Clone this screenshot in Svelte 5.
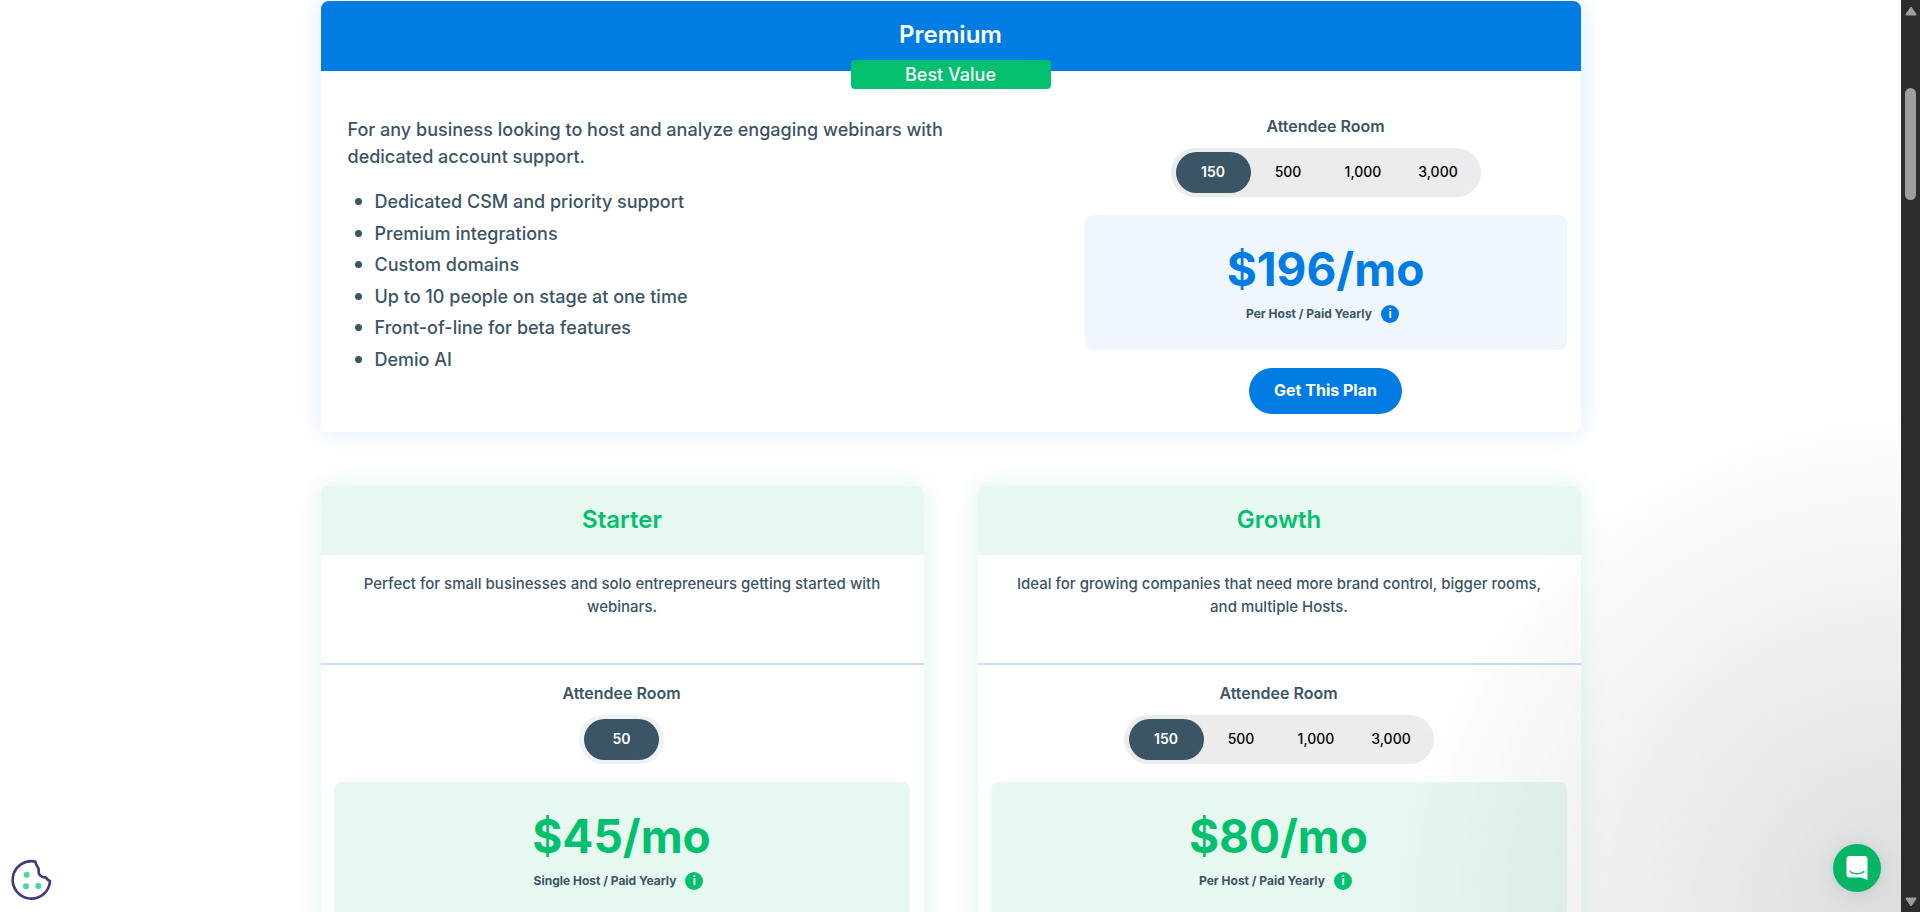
<script lang="ts">
  type Plan = {
    name: string;
    blurb: string;
    rooms: string[];
    prices: string[];
    host: string;
  };

  const features = [
    'Dedicated CSM and priority support',
    'Premium integrations',
    'Custom domains',
    'Up to 10 people on stage at one time',
    'Front-of-line for beta features',
    'Demio AI',
  ];

  const premium: Plan = {
    name: 'Premium',
    blurb: 'For any business looking to host and analyze engaging webinars with dedicated account support.',
    rooms: ['150', '500', '1,000', '3,000'],
    prices: ['$196', '$196', '$196', '$196'],
    host: 'Per Host / Paid Yearly',
  };

  const plans: Plan[] = [
    {
      name: 'Starter',
      blurb: 'Perfect for small businesses and solo entrepreneurs getting started with webinars.',
      rooms: ['50'],
      prices: ['$45'],
      host: 'Single Host / Paid Yearly',
    },
    {
      name: 'Growth',
      blurb: 'Ideal for growing companies that need more brand control, bigger rooms, and multiple Hosts.',
      rooms: ['150', '500', '1,000', '3,000'],
      prices: ['$80', '$80', '$80', '$80'],
      host: 'Per Host / Paid Yearly',
    },
  ];

  let selected: Record<string, number> = $state({ Premium: 0, Starter: 0, Growth: 0 });
</script>

{#snippet picker(plan: Plan)}
  <h3 class="label" id="room-{plan.name}">Attendee Room</h3>
  <div class="switch" class:single={plan.rooms.length === 1} role="group" aria-labelledby="room-{plan.name}">
    {#each plan.rooms as room, i}
      <button
        type="button"
        class="option"
        class:active={selected[plan.name] === i}
        aria-pressed={selected[plan.name] === i}
        onclick={() => (selected[plan.name] = i)}>{room}</button>
    {/each}
  </div>
  <div class="price-box">
    <p class="price">{plan.prices[selected[plan.name]]}/mo</p>
    <p class="terms">
      <span>{plan.host}</span>
      <button type="button" class="info">i</button>
    </p>
  </div>
{/snippet}

<div class="shell">
  <main class="page">
    <div class="content">
      <section class="card premium">
        <header class="head">
          <h2>{premium.name}</h2>
          <span class="badge">Best Value</span>
        </header>
        <div class="body">
          <div class="details">
            <p class="lead">{premium.blurb}</p>
            <ul>
              {#each features as feature}
                <li>{feature}</li>
              {/each}
            </ul>
          </div>
          <div class="offer">
            {@render picker(premium)}
            <button type="button" class="cta">Get This Plan</button>
          </div>
        </div>
      </section>

      <div class="pair">
        {#each plans as plan}
          <section class="card basic">
            <header class="head"><h2>{plan.name}</h2></header>
            <p class="blurb">{plan.blurb}</p>
            <div class="offer">
              {@render picker(plan)}
            </div>
          </section>
        {/each}
      </div>
    </div>

    <div class="glow"></div>

    <button type="button" class="cookie" aria-label="Cookie settings">
      <svg viewBox="0 0 168 168" width="56" height="56" aria-hidden="true">
        <path
          d="M94 29 A56 56 0 1 0 138 87 Q131 84 125 76 Q115 77 109 71 Q103 66 104 58 Q105 50 101 45 Q96 38 94 29 Z"
          fill="#fff" stroke="#453a7b" stroke-width="8" stroke-linejoin="round" />
        <circle cx="68" cy="68" r="9" fill="#4bd69b" />
        <circle cx="66" cy="103" r="9" fill="#4bd69b" />
        <circle cx="103" cy="102" r="9" fill="#4bd69b" />
      </svg>
    </button>

    <button type="button" class="chat" aria-label="Open chat">
      <svg viewBox="0 0 28 32" width="22" height="24" aria-hidden="true">
        <path
          fill="#fff"
          d="M28 32s-4.714-1.855-8.527-3.34H3.437C1.54 28.66 0 27.026 0 25.013V3.644C0 1.633 1.54 0 3.437 0h21.125c1.898 0 3.437 1.632 3.437 3.645v18.404H28V32zm-4.139-11.982a.88.88 0 00-1.292-.105c-.03.026-3.015 2.681-8.57 2.681-5.486 0-8.517-2.636-8.571-2.684a.88.88 0 00-1.29.107 1.01 1.01 0 00-.219.708.992.992 0 00.318.664c.142.128 3.537 3.15 9.762 3.15 6.226 0 9.621-3.022 9.763-3.15a.992.992 0 00.317-.664 1.01 1.01 0 00-.218-.707z" />
      </svg>
    </button>
  </main>

  <div class="scrollbar" aria-hidden="true">
    <svg viewBox="0 0 12 10" width="12" height="10">
      <path d="M6 1 L11 8.2 Q11.4 9 10.6 9 H1.4 Q.6 9 1 8.2 Z" fill="#9f9f9f" stroke="#9f9f9f" stroke-linejoin="round" />
    </svg>
    <div class="track"><div class="thumb"></div></div>
    <svg viewBox="0 0 12 10" width="12" height="10">
      <path d="M6 9 L11 1.8 Q11.4 1 10.6 1 H1.4 Q.6 1 1 1.8 Z" fill="#9f9f9f" stroke="#9f9f9f" stroke-linejoin="round" />
    </svg>
  </div>
</div>

<style>
  :global(body) {
    background: #fff;
  }

  .shell {
    display: flex;
    height: 100vh;
    overflow: hidden;
    color: #3b5566;
    font-family: Inter, 'Liberation Sans', sans-serif;
  }

  h2,
  h3,
  p,
  ul {
    margin: 0;
  }

  button {
    padding: 0;
    border: 0;
    background: none;
    font-family: inherit;
    cursor: pointer;
  }

  .page {
    position: relative;
    flex: 1;
    min-width: 0;
    overflow: hidden;
  }

  .content {
    display: flex;
    flex-direction: column;
    gap: 54px;
    max-width: 1260px;
    margin: 0 auto;
    padding-top: 1px;
  }

  .card {
    border-radius: 8px;
    background: #fff;
  }

  .head {
    border-radius: 8px 8px 0 0;
    text-align: center;
  }

  .head h2 {
    font-size: 24px;
    line-height: 36px;
    font-weight: 600;
  }

  .premium {
    box-shadow: 0 0 28px rgba(0, 124, 227, 0.14);
  }

  .premium .head {
    position: relative;
    padding: 16px 0 18px;
    background: #007ce3;
    color: #fff;
  }

  .badge {
    position: absolute;
    top: 59px;
    left: 50%;
    width: 200px;
    margin-left: -100px;
    border-radius: 4px;
    background: #03c06f;
    font-size: 18px;
    line-height: 29px;
    font-weight: 500;
  }

  .body {
    display: grid;
    grid-template-columns: 1fr 482px;
    gap: 40px;
    padding: 45px 14px 18px 27px;
  }

  .details {
    font-size: 18px;
    line-height: 27px;
    font-weight: 500;
  }

  .lead {
    max-width: 640px;
  }

  ul {
    display: grid;
    grid-auto-rows: 1fr;
    height: 189px;
    margin-top: 16px;
    padding: 0;
    list-style: none;
  }

  li {
    display: flex;
    align-items: center;
    gap: 13px;
    padding-left: 7px;
  }

  li::before {
    content: '';
    width: 7px;
    height: 7px;
    border-radius: 50%;
    background: currentColor;
  }

  .offer {
    display: flex;
    flex-direction: column;
    align-items: center;
  }

  .label {
    font-size: 16px;
    line-height: 20px;
    font-weight: 600;
  }

  .switch {
    display: flex;
    margin-top: 12px;
    padding: 4px 5px;
    border-radius: 25px;
    background: #ececec;
  }

  .switch.single {
    background: #eff3f6;
  }

  .option {
    width: 75px;
    height: 41px;
    padding-bottom: 2px;
    border-radius: 21px;
    color: #000;
    font-size: 14px;
    font-weight: 500;
  }

  .option.active {
    background: #3b5566;
    color: #fff;
    font-weight: 600;
  }

  .price-box {
    display: flex;
    flex-direction: column;
    align-items: center;
    align-self: stretch;
    height: 135px;
    box-sizing: border-box;
    margin-top: 18px;
    padding-top: 29px;
    border-radius: 8px;
    background: #e7f8f0;
  }

  .premium .price-box {
    background: #eff6fd;
  }

  .price {
    color: #03c06f;
    font-size: 46px;
    line-height: 50px;
    font-weight: 700;
  }

  .premium .price {
    color: #007ce3;
  }

  .terms {
    display: flex;
    align-items: center;
    gap: 9px;
    margin-top: 11px;
    padding-right: 6px;
    font-size: 12px;
    line-height: 18px;
    font-weight: 700;
  }

  .info {
    width: 18px;
    height: 18px;
    border-radius: 50%;
    background: #03c06f;
    color: #fff;
    font-size: 12px;
    line-height: 18px;
    font-weight: 600;
  }

  .premium .info {
    background: #007ce3;
  }

  .cta {
    height: 46px;
    margin-top: 18px;
    padding: 0 25px 2px;
    border-radius: 23px;
    background: #007ce3;
    color: #fff;
    font-size: 16px;
    font-weight: 700;
  }

  .pair {
    display: grid;
    grid-template-columns: 1fr 1fr;
    gap: 54px;
  }

  .basic {
    padding-bottom: 60px;
    box-shadow: 0 0 28px rgba(3, 192, 111, 0.14);
  }

  .basic .head {
    padding: 16px 0 17px;
    background: #e7f8f0;
    color: #03c06f;
  }

  .blurb {
    min-height: 69px;
    padding: 17px 30px 22px;
    border-bottom: 2px solid #c9e0f8;
    font-size: 15px;
    line-height: 23px;
    font-weight: 500;
    text-align: center;
  }

  .basic .offer {
    padding: 18px 14px 0 13px;
  }

  .glow {
    position: absolute;
    right: 0;
    bottom: 0;
    width: 500px;
    height: 500px;
    background: radial-gradient(ellipse at bottom right, rgba(29, 39, 54, 0.16) 0, rgba(29, 39, 54, 0) 72%);
    pointer-events: none;
  }

  .cookie {
    position: absolute;
    left: 4px;
    bottom: 4px;
    width: 56px;
    height: 56px;
  }

  .cookie svg {
    display: block;
  }

  .chat {
    position: absolute;
    right: 20px;
    bottom: 20px;
    display: flex;
    align-items: center;
    justify-content: center;
    width: 48px;
    height: 48px;
    border-radius: 50%;
    background: #04b565;
    box-shadow: 0 1px 6px rgba(0, 0, 0, 0.06), 0 2px 24px rgba(0, 0, 0, 0.08);
  }

  .scrollbar {
    display: flex;
    flex-direction: column;
    align-items: center;
    width: 19px;
    box-sizing: border-box;
    padding: 6px 0 5px;
    background: #2c2c2c;
  }

  .track {
    flex: 1;
    padding-top: 72px;
  }

  .thumb {
    width: 11px;
    height: 112px;
    border-radius: 6px;
    background: #9f9f9f;
  }
</style>
